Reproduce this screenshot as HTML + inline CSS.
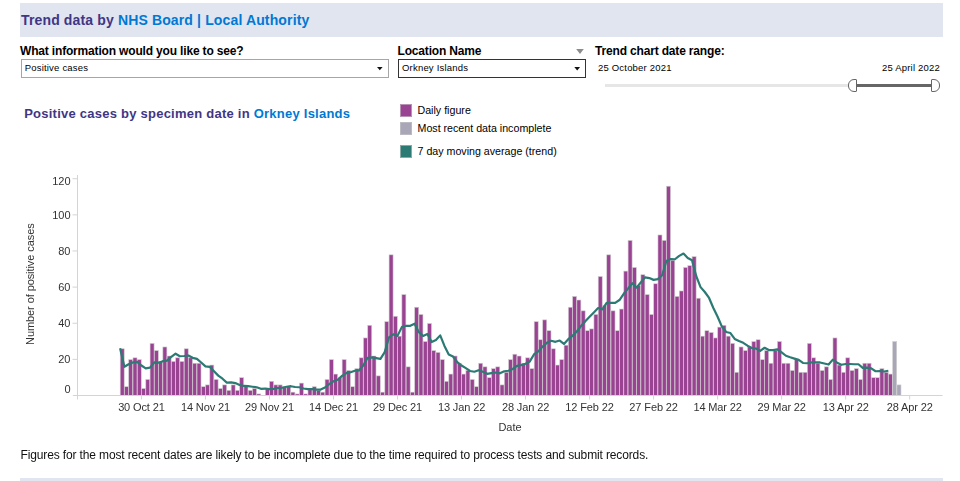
<!DOCTYPE html>
<html><head><meta charset="utf-8">
<style>
html,body{margin:0;padding:0;background:#fff;}
body{width:960px;height:481px;position:relative;overflow:hidden;font-family:"Liberation Sans",sans-serif;}
.abs{position:absolute;white-space:nowrap;}
.banner{position:absolute;left:20px;top:3px;width:923px;height:34px;background:#e1e5f0;}
.bb{position:absolute;left:20px;top:478px;width:923px;height:3px;background:#e1e5f0;}
.h1{font-weight:bold;font-size:14px;letter-spacing:0.14px;color:#3f3685;}
.blue{color:#0078d4;}
.lab{font-weight:bold;font-size:12px;color:#000;letter-spacing:-0.17px;}
.sel{position:absolute;box-sizing:border-box;height:19px;background:#fff;}
.selt{font-size:9.5px;color:#000;letter-spacing:0.2px;}
.arrow{position:absolute;width:0;height:0;border-left:3px solid transparent;border-right:3px solid transparent;border-top:4px solid #222;}
.small{font-size:9.5px;color:#000;letter-spacing:0.19px;}
.leg{font-size:10.67px;color:#000;letter-spacing:0px;}
.sq{position:absolute;width:12px;height:12px;box-sizing:border-box;border:1px solid rgba(200,200,200,0.6);}
.note{font-size:12px;color:#111;letter-spacing:-0.135px;}
svg text.tl{font-family:"Liberation Sans",sans-serif;font-size:11px;fill:#333;}
</style></head><body>
<div class="banner"></div>
<div class="abs h1" style="left:21px;top:10.3px;line-height:20px;">Trend data by <span class="blue">NHS Board | Local Authority</span></div>

<div class="abs lab" style="left:20px;top:43px;line-height:16px;">What information would you like to see?</div>
<div class="sel" style="left:21px;top:59px;width:368px;border:1px solid #a6a6a6;"></div>
<div class="abs selt" style="left:24.7px;top:62px;line-height:12px;">Positive cases</div>


<div class="abs lab" style="left:397.5px;top:43px;line-height:16px;">Location Name</div>

<div class="sel" style="left:398px;top:59px;width:188px;border:1px solid #333;"></div>
<div class="abs selt" style="left:402px;top:62px;line-height:12px;">Orkney Islands</div>


<div class="abs lab" style="left:595px;top:43px;line-height:16px;">Trend chart date range:</div>
<div class="abs small" style="left:598px;top:62px;line-height:12px;">25 October 2021</div>
<div class="abs small" style="left:882px;top:62px;line-height:12px;">25 April 2022</div>
<div style="position:absolute;left:605px;top:84px;width:245px;height:2.5px;background:#e6e6e6;"></div>
<div style="position:absolute;left:856px;top:84px;width:76px;height:3px;background:#666;"></div>
<div style="position:absolute;left:848px;top:79px;width:9px;height:13px;box-sizing:border-box;border:1px solid #666;background:#fff;border-radius:6px 1px 1px 6px / 6px 1px 1px 6px;"></div>
<div style="position:absolute;left:931px;top:79px;width:9px;height:13px;box-sizing:border-box;border:1px solid #666;background:#fff;border-radius:1px 6px 6px 1px / 1px 6px 6px 1px;"></div>

<div class="abs h1" style="left:24.2px;top:105.1px;line-height:18px;font-size:13px;letter-spacing:0.24px;">Positive cases by specimen date in <span class="blue">Orkney Islands</span></div>

<div class="sq" style="left:400px;top:104.2px;height:12.5px;background:#9b4393;"></div>
<div class="abs leg" style="left:417.5px;top:103px;line-height:14px;">Daily figure</div>
<div class="sq" style="left:400px;top:122.1px;height:12.6px;background:#a9a6b8;"></div>
<div class="abs leg" style="left:417.5px;top:121px;line-height:14px;">Most recent data incomplete</div>
<div class="sq" style="left:400px;top:145px;height:12.8px;background:#2b7a74;"></div>
<div class="abs leg" style="left:417.5px;top:143.8px;line-height:14px;">7 day moving average (trend)</div>

<svg class="abs" style="left:0;top:0;will-change:transform" width="960" height="481" viewBox="0 0 960 481">
<line x1="77.5" y1="175" x2="77.5" y2="399.5" stroke="#d4d4d4" stroke-width="1"/>
<line x1="72.5" y1="359.37" x2="77.5" y2="359.37" stroke="#d4d4d4" stroke-width="1"/>
<text x="70.5" y="363.27" text-anchor="end" class="tl">20</text>
<line x1="72.5" y1="323.24" x2="77.5" y2="323.24" stroke="#d4d4d4" stroke-width="1"/>
<text x="70.5" y="327.14" text-anchor="end" class="tl">40</text>
<line x1="72.5" y1="287.11" x2="77.5" y2="287.11" stroke="#d4d4d4" stroke-width="1"/>
<text x="70.5" y="291.01" text-anchor="end" class="tl">60</text>
<line x1="72.5" y1="250.98" x2="77.5" y2="250.98" stroke="#d4d4d4" stroke-width="1"/>
<text x="70.5" y="254.88" text-anchor="end" class="tl">80</text>
<line x1="72.5" y1="214.85" x2="77.5" y2="214.85" stroke="#d4d4d4" stroke-width="1"/>
<text x="70.5" y="218.75" text-anchor="end" class="tl">100</text>
<line x1="72.5" y1="178.72" x2="77.5" y2="178.72" stroke="#d4d4d4" stroke-width="1"/>
<text x="70.5" y="184.82" text-anchor="end" class="tl">120</text>
<text x="70.5" y="392.6" text-anchor="end" class="tl">0</text>
<g stroke="#d0d0d0" stroke-width="0.6">
<rect x="120.20" y="348.78" width="4.0" height="46.72" fill="#9b4393"/>
<rect x="124.47" y="386.72" width="4.0" height="8.78" fill="#9b4393"/>
<rect x="128.74" y="359.62" width="4.0" height="35.88" fill="#9b4393"/>
<rect x="133.00" y="357.81" width="4.0" height="37.69" fill="#9b4393"/>
<rect x="137.27" y="359.62" width="4.0" height="35.88" fill="#9b4393"/>
<rect x="141.54" y="388.52" width="4.0" height="6.98" fill="#9b4393"/>
<rect x="145.81" y="379.49" width="4.0" height="16.01" fill="#9b4393"/>
<rect x="150.08" y="343.36" width="4.0" height="52.14" fill="#9b4393"/>
<rect x="154.34" y="350.59" width="4.0" height="44.91" fill="#9b4393"/>
<rect x="158.61" y="361.43" width="4.0" height="34.07" fill="#9b4393"/>
<rect x="162.88" y="346.97" width="4.0" height="48.53" fill="#9b4393"/>
<rect x="167.15" y="356.01" width="4.0" height="39.49" fill="#9b4393"/>
<rect x="171.42" y="361.43" width="4.0" height="34.07" fill="#9b4393"/>
<rect x="175.68" y="357.81" width="4.0" height="37.69" fill="#9b4393"/>
<rect x="179.95" y="361.43" width="4.0" height="34.07" fill="#9b4393"/>
<rect x="184.22" y="348.78" width="4.0" height="46.72" fill="#9b4393"/>
<rect x="188.49" y="357.81" width="4.0" height="37.69" fill="#9b4393"/>
<rect x="192.76" y="363.23" width="4.0" height="32.27" fill="#9b4393"/>
<rect x="197.02" y="363.23" width="4.0" height="32.27" fill="#9b4393"/>
<rect x="201.29" y="386.72" width="4.0" height="8.78" fill="#9b4393"/>
<rect x="205.56" y="384.91" width="4.0" height="10.59" fill="#9b4393"/>
<rect x="209.83" y="365.04" width="4.0" height="30.46" fill="#9b4393"/>
<rect x="214.10" y="379.49" width="4.0" height="16.01" fill="#9b4393"/>
<rect x="218.36" y="388.52" width="4.0" height="6.98" fill="#9b4393"/>
<rect x="222.63" y="384.91" width="4.0" height="10.59" fill="#9b4393"/>
<rect x="226.90" y="390.33" width="4.0" height="5.17" fill="#9b4393"/>
<rect x="231.17" y="384.91" width="4.0" height="10.59" fill="#9b4393"/>
<rect x="235.44" y="390.33" width="4.0" height="5.17" fill="#9b4393"/>
<rect x="239.70" y="377.69" width="4.0" height="17.81" fill="#9b4393"/>
<rect x="243.97" y="386.72" width="4.0" height="8.78" fill="#9b4393"/>
<rect x="248.24" y="390.33" width="4.0" height="5.17" fill="#9b4393"/>
<rect x="252.51" y="388.52" width="4.0" height="6.98" fill="#9b4393"/>
<rect x="256.78" y="393.94" width="4.0" height="1.56" fill="#9b4393"/>
<rect x="265.31" y="388.52" width="4.0" height="6.98" fill="#9b4393"/>
<rect x="269.58" y="381.30" width="4.0" height="14.20" fill="#9b4393"/>
<rect x="273.85" y="384.91" width="4.0" height="10.59" fill="#9b4393"/>
<rect x="278.12" y="384.91" width="4.0" height="10.59" fill="#9b4393"/>
<rect x="282.38" y="386.72" width="4.0" height="8.78" fill="#9b4393"/>
<rect x="286.65" y="386.72" width="4.0" height="8.78" fill="#9b4393"/>
<rect x="290.92" y="392.14" width="4.0" height="3.36" fill="#9b4393"/>
<rect x="295.19" y="393.94" width="4.0" height="1.56" fill="#9b4393"/>
<rect x="299.46" y="383.10" width="4.0" height="12.40" fill="#9b4393"/>
<rect x="303.72" y="393.94" width="4.0" height="1.56" fill="#9b4393"/>
<rect x="307.99" y="388.52" width="4.0" height="6.98" fill="#9b4393"/>
<rect x="312.26" y="386.72" width="4.0" height="8.78" fill="#9b4393"/>
<rect x="316.53" y="390.33" width="4.0" height="5.17" fill="#9b4393"/>
<rect x="320.80" y="392.14" width="4.0" height="3.36" fill="#9b4393"/>
<rect x="325.06" y="379.49" width="4.0" height="16.01" fill="#9b4393"/>
<rect x="329.33" y="359.62" width="4.0" height="35.88" fill="#9b4393"/>
<rect x="333.60" y="374.07" width="4.0" height="21.43" fill="#9b4393"/>
<rect x="337.87" y="377.69" width="4.0" height="17.81" fill="#9b4393"/>
<rect x="342.14" y="359.62" width="4.0" height="35.88" fill="#9b4393"/>
<rect x="346.40" y="370.46" width="4.0" height="25.04" fill="#9b4393"/>
<rect x="350.67" y="386.72" width="4.0" height="8.78" fill="#9b4393"/>
<rect x="354.94" y="368.65" width="4.0" height="26.85" fill="#9b4393"/>
<rect x="359.21" y="357.81" width="4.0" height="37.69" fill="#9b4393"/>
<rect x="363.48" y="337.94" width="4.0" height="57.56" fill="#9b4393"/>
<rect x="367.74" y="325.30" width="4.0" height="70.20" fill="#9b4393"/>
<rect x="372.01" y="356.01" width="4.0" height="39.49" fill="#9b4393"/>
<rect x="376.28" y="375.88" width="4.0" height="19.62" fill="#9b4393"/>
<rect x="380.55" y="392.14" width="4.0" height="3.36" fill="#9b4393"/>
<rect x="384.82" y="321.68" width="4.0" height="73.82" fill="#9b4393"/>
<rect x="389.08" y="254.84" width="4.0" height="140.66" fill="#9b4393"/>
<rect x="393.35" y="316.26" width="4.0" height="79.24" fill="#9b4393"/>
<rect x="397.62" y="336.14" width="4.0" height="59.36" fill="#9b4393"/>
<rect x="401.89" y="294.59" width="4.0" height="100.91" fill="#9b4393"/>
<rect x="406.16" y="366.85" width="4.0" height="28.65" fill="#9b4393"/>
<rect x="410.42" y="392.14" width="4.0" height="3.36" fill="#9b4393"/>
<rect x="414.69" y="307.23" width="4.0" height="88.27" fill="#9b4393"/>
<rect x="418.96" y="314.46" width="4.0" height="81.04" fill="#9b4393"/>
<rect x="423.23" y="341.56" width="4.0" height="53.94" fill="#9b4393"/>
<rect x="427.50" y="323.49" width="4.0" height="72.01" fill="#9b4393"/>
<rect x="431.76" y="350.59" width="4.0" height="44.91" fill="#9b4393"/>
<rect x="436.03" y="352.39" width="4.0" height="43.11" fill="#9b4393"/>
<rect x="440.30" y="359.62" width="4.0" height="35.88" fill="#9b4393"/>
<rect x="444.57" y="381.30" width="4.0" height="14.20" fill="#9b4393"/>
<rect x="448.84" y="374.07" width="4.0" height="21.43" fill="#9b4393"/>
<rect x="453.10" y="356.01" width="4.0" height="39.49" fill="#9b4393"/>
<rect x="457.37" y="363.23" width="4.0" height="32.27" fill="#9b4393"/>
<rect x="461.64" y="374.07" width="4.0" height="21.43" fill="#9b4393"/>
<rect x="465.91" y="370.46" width="4.0" height="25.04" fill="#9b4393"/>
<rect x="470.18" y="379.49" width="4.0" height="16.01" fill="#9b4393"/>
<rect x="474.44" y="386.72" width="4.0" height="8.78" fill="#9b4393"/>
<rect x="478.71" y="363.23" width="4.0" height="32.27" fill="#9b4393"/>
<rect x="482.98" y="366.85" width="4.0" height="28.65" fill="#9b4393"/>
<rect x="487.25" y="377.69" width="4.0" height="17.81" fill="#9b4393"/>
<rect x="491.52" y="368.65" width="4.0" height="26.85" fill="#9b4393"/>
<rect x="495.78" y="366.85" width="4.0" height="28.65" fill="#9b4393"/>
<rect x="500.05" y="384.91" width="4.0" height="10.59" fill="#9b4393"/>
<rect x="504.32" y="372.27" width="4.0" height="23.23" fill="#9b4393"/>
<rect x="508.59" y="359.62" width="4.0" height="35.88" fill="#9b4393"/>
<rect x="512.86" y="354.20" width="4.0" height="41.30" fill="#9b4393"/>
<rect x="517.12" y="356.01" width="4.0" height="39.49" fill="#9b4393"/>
<rect x="521.39" y="363.23" width="4.0" height="32.27" fill="#9b4393"/>
<rect x="525.66" y="357.81" width="4.0" height="37.69" fill="#9b4393"/>
<rect x="529.93" y="368.65" width="4.0" height="26.85" fill="#9b4393"/>
<rect x="534.20" y="321.68" width="4.0" height="73.82" fill="#9b4393"/>
<rect x="538.46" y="339.75" width="4.0" height="55.75" fill="#9b4393"/>
<rect x="542.73" y="319.88" width="4.0" height="75.62" fill="#9b4393"/>
<rect x="547.00" y="330.72" width="4.0" height="64.78" fill="#9b4393"/>
<rect x="551.27" y="348.78" width="4.0" height="46.72" fill="#9b4393"/>
<rect x="555.54" y="365.04" width="4.0" height="30.46" fill="#9b4393"/>
<rect x="559.80" y="359.62" width="4.0" height="35.88" fill="#9b4393"/>
<rect x="564.07" y="345.17" width="4.0" height="50.33" fill="#9b4393"/>
<rect x="568.34" y="307.23" width="4.0" height="88.27" fill="#9b4393"/>
<rect x="572.61" y="296.39" width="4.0" height="99.11" fill="#9b4393"/>
<rect x="576.88" y="300.01" width="4.0" height="95.49" fill="#9b4393"/>
<rect x="581.14" y="310.84" width="4.0" height="84.66" fill="#9b4393"/>
<rect x="585.41" y="330.72" width="4.0" height="64.78" fill="#9b4393"/>
<rect x="589.68" y="328.91" width="4.0" height="66.59" fill="#9b4393"/>
<rect x="593.95" y="314.46" width="4.0" height="81.04" fill="#9b4393"/>
<rect x="598.22" y="276.52" width="4.0" height="118.98" fill="#9b4393"/>
<rect x="602.48" y="305.43" width="4.0" height="90.07" fill="#9b4393"/>
<rect x="606.75" y="254.84" width="4.0" height="140.66" fill="#9b4393"/>
<rect x="611.02" y="310.84" width="4.0" height="84.66" fill="#9b4393"/>
<rect x="615.29" y="330.72" width="4.0" height="64.78" fill="#9b4393"/>
<rect x="619.56" y="309.04" width="4.0" height="86.46" fill="#9b4393"/>
<rect x="623.82" y="271.10" width="4.0" height="124.40" fill="#9b4393"/>
<rect x="628.09" y="240.39" width="4.0" height="155.11" fill="#9b4393"/>
<rect x="632.36" y="267.49" width="4.0" height="128.01" fill="#9b4393"/>
<rect x="636.63" y="285.55" width="4.0" height="109.95" fill="#9b4393"/>
<rect x="640.90" y="274.71" width="4.0" height="120.79" fill="#9b4393"/>
<rect x="645.16" y="294.59" width="4.0" height="100.91" fill="#9b4393"/>
<rect x="649.43" y="314.46" width="4.0" height="81.04" fill="#9b4393"/>
<rect x="653.70" y="283.75" width="4.0" height="111.75" fill="#9b4393"/>
<rect x="657.97" y="234.97" width="4.0" height="160.53" fill="#9b4393"/>
<rect x="662.24" y="240.39" width="4.0" height="155.11" fill="#9b4393"/>
<rect x="666.50" y="186.20" width="4.0" height="209.30" fill="#9b4393"/>
<rect x="670.77" y="260.26" width="4.0" height="135.24" fill="#9b4393"/>
<rect x="675.04" y="296.39" width="4.0" height="99.11" fill="#9b4393"/>
<rect x="679.31" y="290.97" width="4.0" height="104.53" fill="#9b4393"/>
<rect x="683.58" y="267.49" width="4.0" height="128.01" fill="#9b4393"/>
<rect x="687.84" y="265.68" width="4.0" height="129.82" fill="#9b4393"/>
<rect x="692.11" y="256.65" width="4.0" height="138.85" fill="#9b4393"/>
<rect x="696.38" y="298.20" width="4.0" height="97.30" fill="#9b4393"/>
<rect x="700.65" y="336.14" width="4.0" height="59.36" fill="#9b4393"/>
<rect x="704.92" y="330.72" width="4.0" height="64.78" fill="#9b4393"/>
<rect x="709.18" y="332.52" width="4.0" height="62.98" fill="#9b4393"/>
<rect x="713.45" y="337.94" width="4.0" height="57.56" fill="#9b4393"/>
<rect x="717.72" y="327.10" width="4.0" height="68.40" fill="#9b4393"/>
<rect x="721.99" y="325.30" width="4.0" height="70.20" fill="#9b4393"/>
<rect x="726.26" y="336.14" width="4.0" height="59.36" fill="#9b4393"/>
<rect x="730.52" y="343.36" width="4.0" height="52.14" fill="#9b4393"/>
<rect x="734.79" y="372.27" width="4.0" height="23.23" fill="#9b4393"/>
<rect x="739.06" y="346.97" width="4.0" height="48.53" fill="#9b4393"/>
<rect x="743.33" y="350.59" width="4.0" height="44.91" fill="#9b4393"/>
<rect x="747.60" y="346.97" width="4.0" height="48.53" fill="#9b4393"/>
<rect x="751.86" y="341.56" width="4.0" height="53.94" fill="#9b4393"/>
<rect x="756.13" y="339.75" width="4.0" height="55.75" fill="#9b4393"/>
<rect x="760.40" y="359.62" width="4.0" height="35.88" fill="#9b4393"/>
<rect x="764.67" y="350.59" width="4.0" height="44.91" fill="#9b4393"/>
<rect x="768.94" y="363.23" width="4.0" height="32.27" fill="#9b4393"/>
<rect x="773.20" y="350.59" width="4.0" height="44.91" fill="#9b4393"/>
<rect x="777.47" y="341.56" width="4.0" height="53.94" fill="#9b4393"/>
<rect x="781.74" y="363.23" width="4.0" height="32.27" fill="#9b4393"/>
<rect x="786.01" y="363.23" width="4.0" height="32.27" fill="#9b4393"/>
<rect x="790.28" y="370.46" width="4.0" height="25.04" fill="#9b4393"/>
<rect x="794.54" y="359.62" width="4.0" height="35.88" fill="#9b4393"/>
<rect x="798.81" y="372.27" width="4.0" height="23.23" fill="#9b4393"/>
<rect x="803.08" y="372.27" width="4.0" height="23.23" fill="#9b4393"/>
<rect x="807.35" y="343.36" width="4.0" height="52.14" fill="#9b4393"/>
<rect x="811.62" y="357.81" width="4.0" height="37.69" fill="#9b4393"/>
<rect x="815.88" y="363.23" width="4.0" height="32.27" fill="#9b4393"/>
<rect x="820.15" y="370.46" width="4.0" height="25.04" fill="#9b4393"/>
<rect x="824.42" y="366.85" width="4.0" height="28.65" fill="#9b4393"/>
<rect x="828.69" y="379.49" width="4.0" height="16.01" fill="#9b4393"/>
<rect x="832.96" y="337.94" width="4.0" height="57.56" fill="#9b4393"/>
<rect x="837.22" y="365.04" width="4.0" height="30.46" fill="#9b4393"/>
<rect x="841.49" y="372.27" width="4.0" height="23.23" fill="#9b4393"/>
<rect x="845.76" y="357.81" width="4.0" height="37.69" fill="#9b4393"/>
<rect x="850.03" y="370.46" width="4.0" height="25.04" fill="#9b4393"/>
<rect x="854.30" y="368.65" width="4.0" height="26.85" fill="#9b4393"/>
<rect x="858.56" y="379.49" width="4.0" height="16.01" fill="#9b4393"/>
<rect x="862.83" y="363.23" width="4.0" height="32.27" fill="#9b4393"/>
<rect x="867.10" y="363.23" width="4.0" height="32.27" fill="#9b4393"/>
<rect x="871.37" y="377.69" width="4.0" height="17.81" fill="#9b4393"/>
<rect x="875.64" y="377.69" width="4.0" height="17.81" fill="#9b4393"/>
<rect x="879.90" y="368.65" width="4.0" height="26.85" fill="#9b4393"/>
<rect x="884.17" y="372.27" width="4.0" height="23.23" fill="#9b4393"/>
<rect x="888.44" y="374.07" width="4.0" height="21.43" fill="#9b4393"/>
<rect x="892.71" y="341.56" width="4.0" height="53.94" fill="#a9a6b8"/>
<rect x="896.98" y="384.91" width="4.0" height="10.59" fill="#a9a6b8"/>
</g>
<line x1="72.8" y1="395.5" x2="942.5" y2="395.5" stroke="#d4d4d4" stroke-width="1"/>
<line x1="141.44" y1="395.5" x2="141.44" y2="399.5" stroke="#d4d4d4" stroke-width="1"/>
<text x="141.44" y="411.1" text-anchor="middle" class="tl" letter-spacing="-0.12">30 Oct 21</text>
<line x1="205.46" y1="395.5" x2="205.46" y2="399.5" stroke="#d4d4d4" stroke-width="1"/>
<text x="205.46" y="411.1" text-anchor="middle" class="tl" letter-spacing="-0.12">14 Nov 21</text>
<line x1="269.48" y1="395.5" x2="269.48" y2="399.5" stroke="#d4d4d4" stroke-width="1"/>
<text x="269.48" y="411.1" text-anchor="middle" class="tl" letter-spacing="-0.12">29 Nov 21</text>
<line x1="333.50" y1="395.5" x2="333.50" y2="399.5" stroke="#d4d4d4" stroke-width="1"/>
<text x="333.50" y="411.1" text-anchor="middle" class="tl" letter-spacing="-0.12">14 Dec 21</text>
<line x1="397.52" y1="395.5" x2="397.52" y2="399.5" stroke="#d4d4d4" stroke-width="1"/>
<text x="397.52" y="411.1" text-anchor="middle" class="tl" letter-spacing="-0.12">29 Dec 21</text>
<line x1="461.54" y1="395.5" x2="461.54" y2="399.5" stroke="#d4d4d4" stroke-width="1"/>
<text x="461.54" y="411.1" text-anchor="middle" class="tl" letter-spacing="-0.12">13 Jan 22</text>
<line x1="525.56" y1="395.5" x2="525.56" y2="399.5" stroke="#d4d4d4" stroke-width="1"/>
<text x="525.56" y="411.1" text-anchor="middle" class="tl" letter-spacing="-0.12">28 Jan 22</text>
<line x1="589.58" y1="395.5" x2="589.58" y2="399.5" stroke="#d4d4d4" stroke-width="1"/>
<text x="589.58" y="411.1" text-anchor="middle" class="tl" letter-spacing="-0.12">12 Feb 22</text>
<line x1="653.60" y1="395.5" x2="653.60" y2="399.5" stroke="#d4d4d4" stroke-width="1"/>
<text x="653.60" y="411.1" text-anchor="middle" class="tl" letter-spacing="-0.12">27 Feb 22</text>
<line x1="717.62" y1="395.5" x2="717.62" y2="399.5" stroke="#d4d4d4" stroke-width="1"/>
<text x="717.62" y="411.1" text-anchor="middle" class="tl" letter-spacing="-0.12">14 Mar 22</text>
<line x1="781.64" y1="395.5" x2="781.64" y2="399.5" stroke="#d4d4d4" stroke-width="1"/>
<text x="781.64" y="411.1" text-anchor="middle" class="tl" letter-spacing="-0.12">29 Mar 22</text>
<line x1="845.66" y1="395.5" x2="845.66" y2="399.5" stroke="#d4d4d4" stroke-width="1"/>
<text x="845.66" y="411.1" text-anchor="middle" class="tl" letter-spacing="-0.12">13 Apr 22</text>
<line x1="909.68" y1="395.5" x2="909.68" y2="399.5" stroke="#d4d4d4" stroke-width="1"/>
<text x="909.68" y="411.1" text-anchor="middle" class="tl" letter-spacing="-0.12">28 Apr 22</text>
<polyline points="120.10,348.17 124.37,366.78 128.64,364.25 132.90,362.44 137.17,361.90 141.44,365.51 145.71,368.40 149.98,367.63 154.24,362.47 158.51,362.72 162.78,361.18 167.05,360.66 171.32,356.79 175.58,353.69 179.85,356.27 184.12,356.02 188.39,355.50 192.66,357.82 196.92,358.85 201.19,362.47 205.46,366.34 209.73,366.85 214.00,371.24 218.26,375.63 222.53,378.73 226.80,382.60 231.07,382.34 235.34,383.11 239.60,384.92 243.87,385.95 248.14,386.21 252.41,386.73 256.68,387.24 260.94,388.79 265.21,388.53 269.48,389.05 273.75,388.79 278.02,388.02 282.28,387.76 286.55,386.73 290.82,386.21 295.09,386.98 299.36,387.24 303.62,388.53 307.89,389.05 312.16,389.05 316.43,389.56 320.70,389.56 324.96,387.50 329.23,384.14 333.50,381.31 337.77,379.76 342.04,375.89 346.30,373.05 350.57,372.27 354.84,370.73 359.11,370.47 363.38,365.31 367.64,357.82 371.91,357.31 376.18,358.08 380.45,358.85 384.72,352.14 388.98,337.43 393.25,334.34 397.52,335.89 401.79,327.11 406.06,325.82 410.32,325.82 414.59,323.76 418.86,332.27 423.13,335.89 427.40,334.08 431.66,342.08 435.93,340.01 440.20,335.37 444.47,345.95 448.74,354.47 453.00,356.53 457.27,362.21 461.54,365.56 465.81,368.14 470.08,370.98 474.34,371.76 478.61,370.21 482.88,371.76 487.15,373.82 491.42,373.05 495.68,372.53 499.95,373.31 504.22,371.24 508.49,370.73 512.76,368.92 517.02,365.82 521.29,365.05 525.56,363.76 529.83,361.43 534.10,354.21 538.36,351.37 542.63,346.47 546.90,342.85 551.17,340.79 555.44,341.82 559.70,340.53 563.97,343.89 568.24,339.24 572.51,335.89 576.78,331.50 581.04,326.08 585.31,321.18 589.58,316.79 593.85,312.40 598.12,308.01 602.38,309.30 606.65,302.85 610.92,302.85 615.19,302.85 619.46,300.01 623.72,293.82 627.99,288.66 632.26,283.24 636.53,287.63 640.80,282.46 645.06,277.30 649.33,278.08 653.60,279.88 657.87,279.11 662.14,275.24 666.40,261.04 670.67,258.98 674.94,259.24 679.21,255.88 683.48,253.56 687.74,257.95 692.01,260.27 696.28,276.27 700.55,287.11 704.82,292.01 709.08,297.95 713.35,308.01 717.62,316.79 721.89,326.59 726.16,332.01 730.42,333.05 734.69,338.98 738.96,341.05 743.23,342.85 747.50,345.69 751.76,348.01 756.03,348.53 760.30,350.85 764.57,347.76 768.84,350.08 773.10,350.08 777.37,349.31 781.64,352.40 785.91,355.76 790.18,357.31 794.44,358.60 798.71,359.89 802.98,362.98 807.25,363.24 811.52,362.47 815.78,362.47 820.05,362.47 824.32,363.50 828.59,364.53 832.86,359.63 837.12,362.72 841.39,364.79 845.66,364.02 849.93,364.02 854.20,364.27 858.46,364.27 862.73,367.89 867.00,367.63 871.27,368.40 875.54,371.24 879.80,370.98 884.07,371.50 888.34,370.73" fill="none" stroke="#2b7a74" stroke-width="2.2" stroke-linejoin="round"/>
<text x="510" y="430.9" text-anchor="middle" class="tl">Date</text>
<text transform="translate(33.6,284.2) rotate(-90)" text-anchor="middle" class="tl" letter-spacing="-0.08">Number of positive cases</text>
<polygon points="377,67 382.6,67 379.8,70.3" fill="#111"/>
<polygon points="574.3,67 580.1,67 577.2,70.4" fill="#111"/>
<polygon points="576.2,49.1 583.8,49.1 580,54" fill="#8c8c8c"/>
</svg>

<div class="abs note" style="left:20.5px;top:447.7px;line-height:14px;">Figures for the most recent dates are likely to be incomplete due to the time required to process tests and submit records.</div>
<div class="bb"></div>
</body></html>
